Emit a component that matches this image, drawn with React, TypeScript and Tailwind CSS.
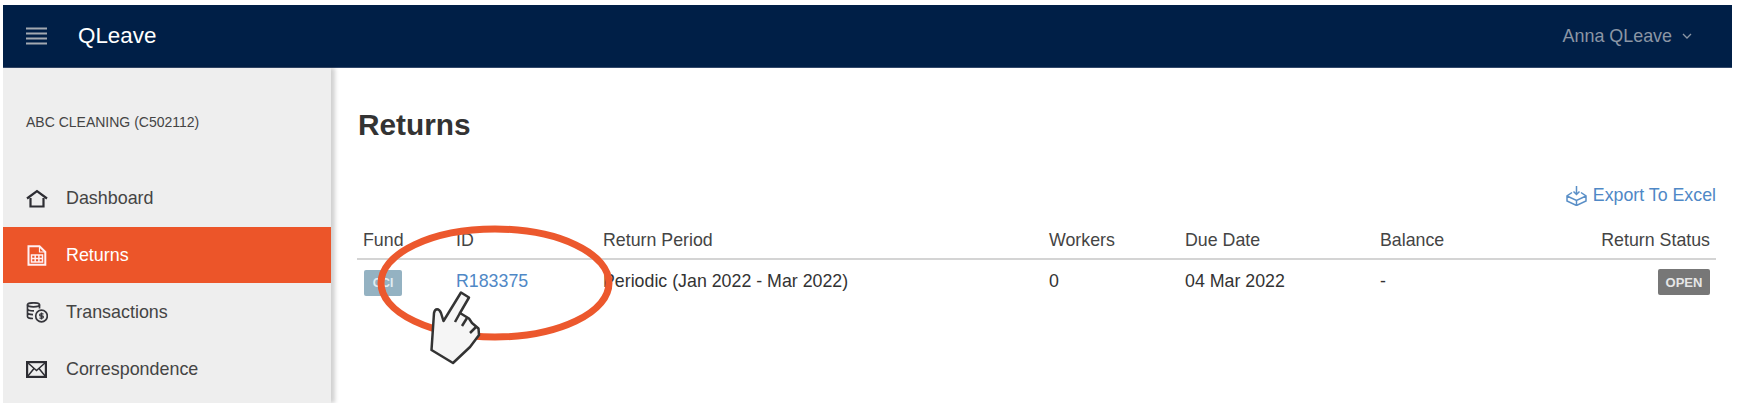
export default function App() {
  const font = { fontFamily: '"Liberation Sans", Arial, sans-serif' };
  return (
    <div style={font} className="relative h-[403px] w-[1739px] overflow-hidden bg-white pl-[3px] pr-[7px] pt-[5px] text-[#333]">
      <header className="flex h-[63px] items-center justify-between border-b border-[#33496b] bg-[#001f47] pl-[23px] pr-[40px]">
        <div className="flex items-center">
          <svg width="21" height="18" viewBox="0 0 21 18" className="text-[#a3a9b1]">
            <path d="M0 1.500H21M0 6.500H21M0 11.500H21M0 16.500H21" stroke="currentColor" strokeWidth="2.200" />
          </svg>
          <span className="ml-[31px] text-[22.4px] leading-[30px] text-white">QLeave</span>
        </div>
        <div className="flex items-center gap-[10px] text-[17.9px] text-[#8b96a5]">
          <span>Anna QLeave</span>
          <svg width="10" height="6" viewBox="0 0 10 6" fill="none">
            <path d="M1 1L5 5L9 1" stroke="currentColor" strokeWidth="1.300" />
          </svg>
        </div>
      </header>
      <div className="flex h-[335px]">
        <aside className="w-[328px] shrink-0 bg-[#eeeeee] shadow-[4px_0_4px_rgba(0,0,0,0.18)]">
          <div className="pl-[23px] pt-[46px] text-[14px] leading-[16px] text-[#444]">ABC CLEANING (C502112)</div>
          <nav className="mt-[40px] text-[17.9px] text-[#444]">
            <div className="flex h-[57px] items-center pl-[23px]">
              <svg width="22" height="19" viewBox="0 0 22 19" fill="none" stroke="#2d2d33" strokeWidth="2.200">
                <path d="M1 9.500L11 2L21 9.500" />
                <path d="M4.500 9V17.500H17.500V9" />
              </svg>
              <span className="ml-[18px]">Dashboard</span>
            </div>
            <div className="flex h-[56px] items-center bg-[#ec5529] pl-[24px] text-white">
              <svg width="20" height="21" viewBox="0 0 20 21" fill="none" stroke="#fff0f3" strokeWidth="2">
                <path d="M1.500 1.200H12.500L18.300 7V19.800H1.500Z" />
                <path d="M12.500 1.200V7H18.300" strokeWidth="1.200" />
                <path d="M4.500 10H15.500V17H4.500ZM4.500 13.500H15.500M8.200 10V17M11.900 10V17" strokeWidth="1.500" />
              </svg>
              <span className="ml-[19px]">Returns</span>
            </div>
            <div className="flex h-[58px] items-center pl-[23px]">
              <svg width="22" height="21" viewBox="0 0 22 21" fill="none" stroke="#35353b" strokeWidth="1.700">
                <ellipse cx="7.500" cy="2.800" rx="6" ry="2" />
                <path d="M1.500 2.800V14.500C1.500 15.700 3.500 16.500 7 16.500M1.500 6.700C1.500 7.900 4 8.800 8 8.800M1.500 10.600C1.500 11.800 3.500 12.600 7 12.600M13.500 2.800V6.500" />
                <circle cx="15.500" cy="14" r="5.800" fill="#eeeeee" />
                <path d="M17.500 11.800H14.700C13.300 11.800 13.300 14 14.700 14H16.300C17.700 14 17.700 16.200 16.300 16.200H13.500M15.500 10.500V17.500" strokeWidth="1.300" />
              </svg>
              <span className="ml-[18px]">Transactions</span>
            </div>
            <div className="flex h-[57px] items-center pl-[23px]">
              <svg width="21" height="17" viewBox="0 0 21 17" fill="none" stroke="#2d2d33" strokeWidth="2.400">
                <rect x="1" y="1" width="19" height="15" />
                <path d="M1.500 1.500L10.500 9.500L19.500 1.500M1.500 15.500L8 7.500M19.500 15.500L13 7.500" strokeWidth="1.500" />
              </svg>
              <span className="ml-[19px]">Correspondence</span>
            </div>
          </nav>
        </aside>
        <main className="min-w-0 flex-1 pl-[27px] pr-[16px]">
          <h1 className="mt-[38px] text-[29.8px] font-bold leading-[38px] text-[#333]">Returns</h1>
          <div className="mt-[38px] flex h-[27px] items-center justify-end gap-[6px] text-[17.8px] text-[#4f88c6]">
            <svg width="21" height="20" viewBox="0 0 21 20" fill="none" stroke="#5a8fc7" strokeWidth="1.500">
              <path d="M10.500 0V8M7.500 5.500L10.500 8.500L13.500 5.500" />
              <path d="M6 6.500L1 10V15L10.500 19.500L20 15V10L15 6.500M1 10L10.500 14.500L20 10M10.500 14.500V19.500" />
            </svg>
            <span>Export To Excel</span>
          </div>
          <table className="ml-[-1px] mt-[14px] w-[1359px] table-fixed border-collapse text-left text-[17.8px]">
            <colgroup>
              <col className="w-[99px]" />
              <col className="w-[147px]" />
              <col className="w-[446px]" />
              <col className="w-[136px]" />
              <col className="w-[195px]" />
              <col className="w-[130px]" />
              <col />
            </colgroup>
            <thead>
              <tr className="h-[36px] border-b-2 border-[#d4d4d4] text-[#444]">
                <th className="pl-[6px] font-normal">Fund</th>
                <th className="font-normal">ID</th>
                <th className="font-normal">Return Period</th>
                <th className="font-normal">Workers</th>
                <th className="font-normal">Due Date</th>
                <th className="font-normal">Balance</th>
                <th className="pr-[6px] text-right font-normal">Return Status</th>
              </tr>
            </thead>
            <tbody>
              <tr className="h-[44px]">
                <td className="pl-[7px]">
                  <span className="inline-flex h-[26px] w-[38px] items-center justify-center rounded-[2px] bg-[#94b2c2] text-[12px] font-bold text-[#e2edf2]">CCI</span>
                </td>
                <td className="text-[#4f88c6]">R183375</td>
                <td>Periodic (Jan 2022 - Mar 2022)</td>
                <td>0</td>
                <td>04 Mar 2022</td>
                <td>-</td>
                <td className="pr-[6px] text-right">
                  <span className="inline-flex h-[26px] w-[52px] items-center justify-center rounded-[2px] bg-[#777777] text-[13px] font-bold text-[#e6e6e6]">OPEN</span>
                </td>
              </tr>
            </tbody>
          </table>
        </main>
      </div>
      <svg className="absolute left-[370px] top-[220px]" width="260" height="160" viewBox="370 220 260 160" fill="none">
        <ellipse cx="495" cy="283" rx="114" ry="54" stroke="#ec582d" strokeWidth="7" />
        <path d="M431.500 350L434 313C435 308 439 308 441 313L443.500 321L461 292.500L469 297.500L460 313L469 318.500L472 323L478.500 328.500L479 335L470 347L453 363Z" fill="#f5f5f5" stroke="#333" strokeWidth="2.500" strokeLinejoin="round" />
        <path d="M455 322L460 313M462 326L467 318M470 333L476 327" stroke="#333" strokeWidth="2.500" />
      </svg>
    </div>
  );
}
